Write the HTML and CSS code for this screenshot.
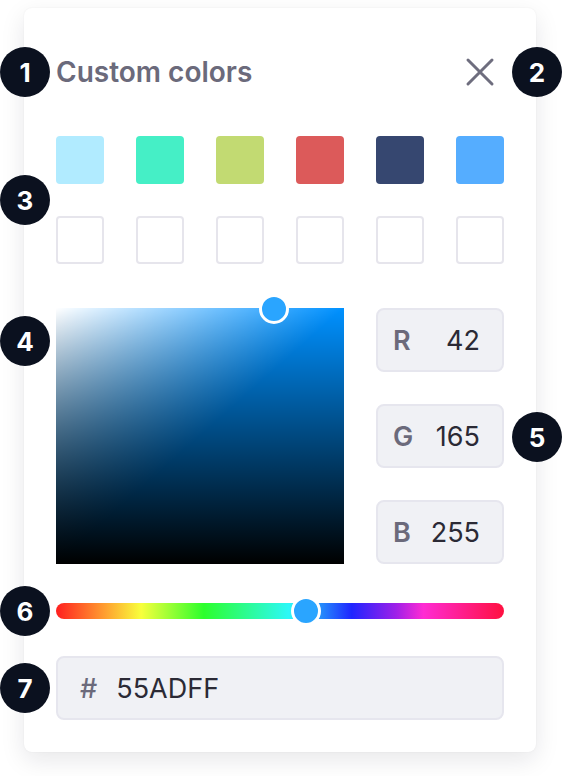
FILE: index.html
```html
<!DOCTYPE html>
<html>
<head>
<meta charset="utf-8">
<link rel="stylesheet" href="styles.css">
</head>
<body>
<div class="stage">
  <div class="card">
    <div class="header">
      <h1 class="title">Custom colors</h1>
      <svg class="close" width="30" height="30" viewBox="0 0 30 30"><path d="M3 3 L27 27 M27 3 L3 27" stroke="#6e6d7e" stroke-width="3" stroke-linecap="round" fill="none"/></svg>
    </div>
    <div class="swatches">
      <div class="sw" style="background:#b1ebff"></div>
      <div class="sw" style="background:#45efc6"></div>
      <div class="sw" style="background:#c2da72"></div>
      <div class="sw" style="background:#dc5a5a"></div>
      <div class="sw" style="background:#364770"></div>
      <div class="sw" style="background:#55adff"></div>
      <div class="sw empty"></div>
      <div class="sw empty"></div>
      <div class="sw empty"></div>
      <div class="sw empty"></div>
      <div class="sw empty"></div>
      <div class="sw empty"></div>
    </div>
    <div class="picker-row">
      <div class="sv">
        <div class="thumb sv-thumb"></div>
      </div>
      <div class="rgb">
        <div class="field"><span class="lbl">R</span><span class="val">42</span></div>
        <div class="field"><span class="lbl">G</span><span class="val">165</span></div>
        <div class="field"><span class="lbl">B</span><span class="val">255</span></div>
      </div>
    </div>
    <div class="hue">
      <div class="thumb hue-thumb"></div>
    </div>
    <div class="hex"><span class="lbl hash">#</span><span class="val">55ADFF</span></div>
  </div>
  <div class="badge b1">1</div>
  <div class="badge b2">2</div>
  <div class="badge b3">3</div>
  <div class="badge b4">4</div>
  <div class="badge b5">5</div>
  <div class="badge b6">6</div>
  <div class="badge b7">7</div>
</div>
</body>
</html>
```
FILE: styles.css
```css
* { box-sizing: border-box; }
html, body { margin: 0; padding: 0; background: #ffffff; }
body { font-family: Inter, "Noto Sans", sans-serif; width: 562px; height: 776px; overflow: hidden; }
.stage { position: relative; width: 562px; height: 776px; padding: 8px 26px 0 24px; }
.card {
  width: 512px;
  height: 744px;
  background: #fff;
  border-radius: 8px;
  box-shadow: 0 8px 24px rgba(20, 20, 40, 0.10), 0 0 2px rgba(20,20,40,0.06);
  padding: 32px;
}
.header { height: 64px; display: flex; align-items: center; justify-content: space-between; }
.title { margin: 0; font-size: 28px; font-weight: 600; color: #6b6a7b; letter-spacing: 0; }
.close { margin-right: 9px; }
.swatches { margin-top: 32px; display: grid; grid-template-columns: repeat(6, 48px); gap: 32px; }
.sw { width: 48px; height: 48px; border-radius: 4px; }
.sw.empty { border: 2px solid #e6e5ec; }
.picker-row { margin-top: 44px; display: flex; gap: 32px; }
.sv {
  position: relative;
  width: 288px;
  height: 256px;
  background:
    linear-gradient(to top, #000 0%, rgba(0,0,0,0) 100%),
    linear-gradient(to bottom right, #ffffff 0%, rgba(255,255,255,0) 50%),
    #0091ff;
}
.thumb {
  position: absolute;
  width: 30px;
  height: 30px;
  border-radius: 50%;
  background: #2aa5ff;
  border: 3px solid #fff;
}
.sv-thumb { left: 203px; top: -14px; }
.rgb { display: flex; flex-direction: column; gap: 32px; }
.field, .hex {
  height: 64px;
  background: #f0f1f5;
  border: 2px solid #e6e6ee;
  border-radius: 8px;
  display: flex;
  align-items: center;
  font-size: 27px;
}
.field { width: 128px; padding: 0 22px 0 15px; justify-content: space-between; }
.lbl { color: #6b6a7b; font-weight: 600; }
.hash { font-weight: 500; }
.val { color: #2b2a35; font-weight: 400; }
.hue {
  position: relative;
  margin-top: 39px;
  height: 16px;
  border-radius: 8px;
  background: linear-gradient(to right, #ff1f1f 0%, #ffa030 11%, #f8ff3c 19%, #2cff2c 33%, #2cf8f8 52%, #1f25ff 66%, #a020e8 76%, #ff2bd3 82%, #ff1040 100%);
}
.hue-thumb { left: 235px; top: -7px; }
.hex { margin-top: 37px; width: 448px; padding: 0 0 0 22px; gap: 19px; }
.badge {
  position: absolute;
  width: 50px;
  height: 50px;
  border-radius: 50%;
  background: #0b111f;
  color: #fff;
  font-weight: 700;
  font-size: 26px;
  display: flex;
  align-items: center;
  justify-content: center;
}
.b1 { left: 0; top: 47px; }
.b2 { left: 512px; top: 47px; }
.b3 { left: 0; top: 175px; }
.b4 { left: 0; top: 316px; }
.b5 { left: 512px; top: 412px; }
.b6 { left: 0; top: 586px; }
.b7 { left: 0; top: 663px; }
```
